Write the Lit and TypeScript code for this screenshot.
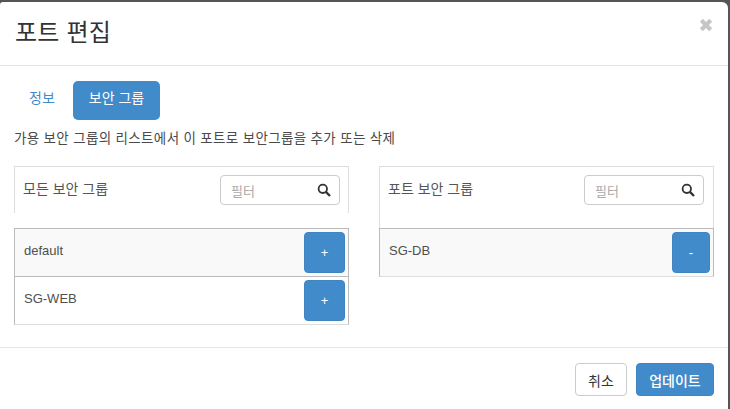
import { LitElement, html, css } from "lit";
import { customElement } from "lit/decorators.js";

@customElement("app-root")
export class AppRoot extends LitElement {
  static styles = css`
    :host { display: block; width: 730px; height: 409px; overflow: hidden; background: #555; font-family: "Liberation Sans", "Noto Sans CJK KR", sans-serif; font-size: 13px; color: #333; }
    * { box-sizing: border-box; }
    .modal { width: 728px; height: 407px; margin-top: 2px; background: #fff; border-radius: 3px 6px 0 0; display: flex; flex-direction: column; }
    .head { height: 64px; border-bottom: 1px solid #e5e5e5; padding: 0 15px; display: flex; justify-content: space-between; flex: none; }
    h4 { margin: 0; font-size: 24px; font-weight: 400; line-height: 61px; letter-spacing: 0.2px; }
    .close { margin: 16px 0 0 0; height: 14px; }
    .body { flex: 1; padding: 15px 0 0 14px; }
    .tabs { display: flex; height: 39px; gap: 3px; font-size: 14px; }
    .tab { padding: 0 15px; line-height: 35px; color: #428bca; border-radius: 5px; }
    .tab.active { background: #428bca; color: #fff; padding: 0 16px; }
    .desc { margin: 10px 0 0 0; line-height: 18px; height: 36px; font-size: 13.5px; letter-spacing: 0.34px; color: #4a4a4a; }
    .cols { display: flex; justify-content: space-between; width: 700px; }
    .col { width: 335px; }
    .ph { border: 1px solid #ddd; border-bottom: 0; height: 47px; display: flex; justify-content: space-between; padding: 8px 8px 0 8px; color: #555; }
    .col.r .ph { height: 62px; padding-right: 9px; }
    .ph > span { line-height: 30px; margin-top: -1px; font-size: 14px; }
    .filter { width: 120px; height: 30px; border: 1px solid #ccc; border-radius: 4px; display: flex; justify-content: space-between; align-items: center; padding: 0 8px 0 10px; color: #aaa; }
    .gap { height: 15px; }
    .col.r .gap { display: none; }
    .list { border: 1px solid #bbb; border-bottom-color: #ddd; }
    .row { height: 47px; display: flex; justify-content: space-between; padding: 3px 3px 0 9px; }
    .row + .row { border-top: 1px solid #bbb; height: 48px; }
    .row:nth-child(odd) { background: #f9f9f9; }
    .row > span { line-height: 38px; color: #4f4f4f; }
    .btn { background: #428bca; color: #fff; border: 1px solid #3f85c1; border-radius: 4px; height: 41px; width: 41px; display: flex; align-items: center; justify-content: center; }
    .col.r .btn { width: 38px; }
    .foot { flex: none; height: 62px; border-top: 1px solid #e5e5e5; display: flex; justify-content: flex-end; gap: 9px; padding: 15px 14px 0 0; font-size: 14px; }
    .fb { height: 33px; width: 52px; border-radius: 4px; display: flex; align-items: center; justify-content: center; border: 1px solid #ccc; color: #333; }
    .fb.p { width: 78px; background: #428bca; border-color: #3f85c1; color: #fff; font-weight: 500; }
  `;

  private icon() {
    return html`<svg width="14" height="14" viewBox="0 0 14 14" fill="none" stroke="#333" stroke-width="1.8"><circle cx="5.8" cy="5.8" r="4.2"/><path d="M8.9 8.9 L13 13" stroke-width="2.3"/></svg>`;
  }

  private panel(title: string, cls: string, rows: [string, string][]) {
    return html`<div class="col ${cls}">
      <div class="ph"><span>${title}</span><div class="filter"><span>필터</span>${this.icon()}</div></div>
      <div class="gap"></div>
      <div class="list">${rows.map(([n, s]) => html`<div class="row"><span>${n}</span><div class="btn">${s}</div></div>`)}</div>
    </div>`;
  }

  render() {
    return html`<div class="modal">
      <div class="head"><h4>포트 편집</h4><svg class="close" width="14" height="14" viewBox="0 0 14 14" stroke="#c6c6c6" stroke-width="4.2" fill="none"><path d="M2.3 2.3 L11.7 11.7 M11.7 2.3 L2.3 11.7"/></svg></div>
      <div class="body">
        <div class="tabs"><div class="tab">정보</div><div class="tab active">보안 그룹</div></div>
        <p class="desc">가용 보안 그룹의 리스트에서 이 포트로 보안그룹을 추가 또는 삭제</p>
        <div class="cols">
          ${this.panel("모든 보안 그룹", "l", [["default", "+"], ["SG-WEB", "+"]])}
          ${this.panel("포트 보안 그룹", "r", [["SG-DB", "-"]])}
        </div>
      </div>
      <div class="foot"><div class="fb">취소</div><div class="fb p">업데이트</div></div>
    </div>`;
  }
}
